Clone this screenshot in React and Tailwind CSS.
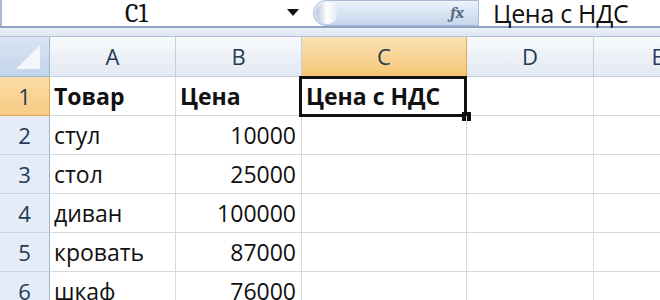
import React from "react";

const cellFont = { fontFamily: '"Open Sans", "Noto Sans", sans-serif' };

const rows = [
  ["1", "Товар", "Цена", "Цена с НДС"],
  ["2", "стул", "10000", ""],
  ["3", "стол", "25000", ""],
  ["4", "диван", "100000", ""],
  ["5", "кровать", "87000", ""],
  ["6", "шкаф", "76000", ""],
];

export default function App() {
  return (
    <div className="w-[660px] h-[300px] overflow-hidden bg-white relative" style={cellFont}>
      {/* formula bar */}
      <div className="flex h-[26px] bg-white">
        <div className="w-[313px] relative flex items-center border-l-2 border-[#a9b8cc]">
          <div className="flex-1 text-center pr-[16px] pt-[2px] text-[26px] leading-none text-[#111] font-serif">C1</div>
          <svg width="12" height="7" viewBox="0 0 12 7" className="mr-[14px] mb-[2px]">
            <path d="M0 0 L12 0 L6 7 Z" fill="#111" />
          </svg>
        </div>
        <div className="w-[166px] h-[26px] rounded-bl-[16px] rounded-tl-[16px] bg-gradient-to-b from-[#edf3fb] via-[#d8e4f3] to-[#c5d6ec] border border-[#a8bcd8] flex items-center relative">
          <div className="w-[22px] h-[22px] ml-[2px] rounded-full bg-gradient-to-r from-[#b8c6d8] via-white to-[#dfe8f4]"></div>
          <div className="ml-auto mr-[14px] text-[#5a6b80] italic font-bold text-[17px] font-serif">fx</div>
        </div>
        <div className="flex-1 flex items-center pl-[14px] text-[25px] text-[#111] leading-none tracking-[-0.3px]">Цена с НДС</div>
      </div>
      <div className="h-[2px] bg-[#8fa4c4]"></div>
      <div className="h-[9px] bg-gradient-to-b from-[#e9f0f9] to-[#dfe7f2] border-b border-[#b4c3d8]"></div>

      {/* grid */}
      <div className="grid grid-cols-[50px_126px_126px_165px_127px_128px]">
        {/* header row */}
        <div className="h-[40px] bg-gradient-to-b from-[#d9e5f4] to-[#c3d4ea] border-r border-b border-[#9eb6ce] relative">
          <svg width="24" height="24" viewBox="0 0 24 24" className="absolute right-[9px] bottom-[7px]">
            <path d="M24 0 L24 24 L0 24 Z" fill="#f3f7fc" />
          </svg>
        </div>
        {["A", "B", "C", "D", "E"].map((c) => (
          <div
            key={c}
            className={
              "h-[40px] flex items-center justify-center text-[22px] border-r border-b " +
              (c === "C"
                ? "bg-gradient-to-b from-[#fbe2b4] to-[#f6c774] border-[#e2a94e] text-[#253a55]"
                : "bg-gradient-to-b from-[#f7f9fc] to-[#e3e9f2] border-[#c2cfdf] text-[#253a55]")
            }
          >
            {c}
          </div>
        ))}

        {rows.map((r, i) => (
          <React.Fragment key={i}>
            <div
              className={
                "h-[39px] flex items-center justify-center text-[22px] border-r border-b " +
                (i === 0
                  ? "bg-gradient-to-b from-[#fbdca6] to-[#f6cb82] border-[#e2a94e] text-[#253a55]"
                  : "bg-[#e4ecf7] border-r-[#9eb6ce] border-b-[#c5d3e4] text-[#253a55]")
              }
            >
              {r[0]}
            </div>
            <div className={"h-[39px] flex items-center pl-[4px] text-[23px] text-[#111] border-r border-b border-[#d4dae3] " + (i === 0 ? "font-bold" : "")}>
              {r[1]}
            </div>
            <div
              className={
                "h-[39px] flex items-center text-[23px] text-[#111] border-r border-b border-[#d4dae3] " +
                (i === 0 ? "font-bold pl-[4px]" : "justify-end pr-[5px]")
              }
            >
              {r[2]}
            </div>
            <div className={"h-[39px] flex items-center pl-[4px] text-[23px] text-[#111] border-r border-b border-[#d4dae3] relative " + (i === 0 ? "font-bold" : "")}>
              {i === 0 && (
                <>
                  <div className="absolute left-[-3px] top-[-1px] right-[-1px] bottom-[-2px] border-[3px] border-[#111]"></div>
                  <div className="absolute right-[-5px] bottom-[-6px] w-[9px] h-[9px] bg-[#111]"></div>
                </>
              )}
              <span className="relative whitespace-nowrap">{r[3]}</span>
            </div>
            <div className="h-[39px] border-r border-b border-[#d4dae3]"></div>
            <div className="h-[39px] border-b border-[#d4dae3]"></div>
          </React.Fragment>
        ))}
      </div>
    </div>
  );
}
